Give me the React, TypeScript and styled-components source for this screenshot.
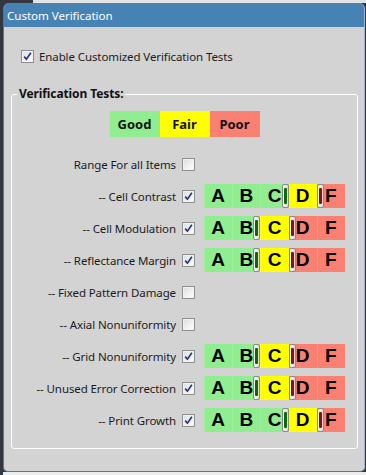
import React from "react";
import styled, { createGlobalStyle } from "styled-components";

const Global = createGlobalStyle`
  html, body { margin: 0; padding: 0; }
  body {
    width: 366px;
    height: 475px;
    overflow: hidden;
    background:
      linear-gradient(#e3e3e3, #e3e3e3) 33px 0 / 100% 3px no-repeat,
      linear-gradient(#ededed, #ededed) 3px 472px / 100% 3px no-repeat,
      #34373d;
    font-family: "Noto Sans", "Open Sans", sans-serif;
  }
  #root { padding: 3px 1px 0 3px; }
`;

const Window = styled.div`
  width: 362px;
  height: 469px;
  box-sizing: border-box;
  background: #d3d3d3;
  border: 1px solid #3f7db2;
  border-top: none;
  border-right-color: #9fb9d0;
  border-radius: 6px 6px 5px 5px;
  overflow: hidden;
  display: flex;
  flex-direction: column;
`;

const TitleBar = styled.div`
  height: 24px;
  background: #4682b4;
  color: #fff;
  font-size: 11.6px;
  letter-spacing: -0.05px;
  display: flex;
  align-items: center;
  padding-left: 4px;
  margin: 0 -1px;
`;

const Body = styled.div`
  padding: 21px 6px 0 7px;
  display: flex;
  flex-direction: column;
`;

const CheckRow = styled.label`
  display: flex;
  align-items: center;
  gap: 5px;
  height: 16px;
  margin-left: 10px;
  font-size: 11.5px;
  letter-spacing: -0.1px;
  color: #1b1b1b;
`;

const Box = styled.span<{ $checked?: boolean }>`
  width: 13px;
  height: 13px;
  box-sizing: border-box;
  border: 1px solid #8e8f8f;
  background: linear-gradient(135deg, #dcdcdc 0%, #f6f6f6 70%, #ffffff 100%);
  box-shadow: inset 0 0 0 1px #f2f2f2;
  display: flex;
  align-items: center;
  justify-content: center;
  flex: none;
`;

const CheckBox = ({ checked }: { checked?: boolean }) => (
  <Box $checked={checked}>
    {checked && (
      <svg width="9" height="9" viewBox="0 0 9 9">
        <path d="M1.2 4.6 L3.4 7.2 L7.9 0.8" fill="none" stroke="#23358f" strokeWidth="1.7" />
      </svg>
    )}
  </Box>
);

const Group = styled.fieldset`
  margin: 22px 0 0 0;
  padding: 0 0 16px 0;
  border: 1px solid #ffffff;
  border-radius: 3px;
  min-width: 0;
`;

const GroupLegend = styled.legend`
  margin-left: 5px;
  padding: 0 2px;
  font-size: 12px;
  font-weight: 700;
  letter-spacing: -0.1px;
  color: #111;
  line-height: 16px;
`;

const Legend = styled.div`
  display: flex;
  justify-content: center;
  margin-top: 9px;
`;

const Swatch = styled.div<{ $bg: string }>`
  width: 50px;
  height: 26px;
  background: ${(p) => p.$bg};
  display: flex;
  align-items: center;
  justify-content: center;
  font-size: 13px;
  font-weight: 700;
  color: #111;
`;

const Rows = styled.div`
  display: grid;
  grid-template-columns: 164px 13px 141px;
  column-gap: 6px;
  grid-auto-rows: 24px;
  row-gap: 8px;
  margin-top: 15px;
  align-items: center;
`;

const Label = styled.div`
  text-align: right;
  font-size: 11.5px;
  letter-spacing: -0.1px;
  color: #1b1b1b;
  white-space: nowrap;
`;

const CheckCell = styled.div`
  display: flex;
  margin-right: -3px;
`;

const Bar = styled.div`
  position: relative;
  margin-left: 3px;
  width: 141px;
  height: 24px;
  display: grid;
  grid-template-columns: repeat(5, 1fr);
`;

const tones: Record<string, string> = {
  good: "#90ee90",
  fair: "#ffff00",
  poor: "#fa8072",
};

const Cell = styled.div<{ $tone: string }>`
  background: ${(p) => tones[p.$tone]};
  display: flex;
  align-items: center;
  justify-content: center;
  font-family: "Liberation Sans", Arial, sans-serif;
  font-weight: 700;
  font-size: 19px;
  color: #000;
  box-shadow: inset 1px 0 0 rgba(255, 255, 255, 0.12);
`;

const Thumb = styled.div<{ $color: string }>`
  position: absolute;
  top: 0;
  width: 7px;
  height: 24px;
  box-sizing: border-box;
  border: 1px solid #8a8a8a;
  border-radius: 2px;
  background: linear-gradient(to right, #f7f7f7, #d9d9d9);
  &::after {
    content: "";
    position: absolute;
    left: 1px;
    top: 3px;
    bottom: 3px;
    width: 3px;
    border-radius: 1px;
    background: ${(p) => p.$color};
  }
`;

const letters = ["A", "B", "C", "D", "F"];

const RangeBar = ({ low, high }: { low: number; high: number }) => (
  <Bar>
    {letters.map((l, i) => (
      <Cell key={l} $tone={i < low ? "good" : i < high ? "fair" : "poor"}>
        {l}
      </Cell>
    ))}
    <Thumb $color="#0b6b0b" style={{ left: `calc(${low * 20}% - 7px)` }} />
    <Thumb $color="#8b1010" style={{ left: `${high * 20}%` }} />
  </Bar>
);

type Item = { label: string; checked: boolean; range?: [number, number] };

const items: Item[] = [
  { label: "Range For all Items", checked: false },
  { label: "-- Cell Contrast", checked: true, range: [3, 4] },
  { label: "-- Cell Modulation", checked: true, range: [2, 3] },
  { label: "-- Reflectance Margin", checked: true, range: [2, 3] },
  { label: "-- Fixed Pattern Damage", checked: false },
  { label: "-- Axial Nonuniformity", checked: false },
  { label: "-- Grid Nonuniformity", checked: true, range: [2, 3] },
  { label: "-- Unused Error Correction", checked: true, range: [2, 3] },
  { label: "-- Print Growth", checked: true, range: [3, 4] },
];

export default function App() {
  return (
    <>
      <Global />
      <Window>
        <TitleBar>Custom Verification</TitleBar>
        <Body>
          <CheckRow>
            <CheckBox checked />
            Enable Customized Verification Tests
          </CheckRow>
          <Group>
            <GroupLegend>Verification Tests:</GroupLegend>
            <Legend>
              <Swatch $bg="#90ee90">Good</Swatch>
              <Swatch $bg="#ffff00">Fair</Swatch>
              <Swatch $bg="#fa8072">Poor</Swatch>
            </Legend>
            <Rows>
              {items.map((it) => (
                <React.Fragment key={it.label}>
                  <Label>{it.label}</Label>
                  <CheckCell>
                    <CheckBox checked={it.checked} />
                  </CheckCell>
                  {it.range ? <RangeBar low={it.range[0]} high={it.range[1]} /> : <div />}
                </React.Fragment>
              ))}
            </Rows>
          </Group>
        </Body>
      </Window>
    </>
  );
}
